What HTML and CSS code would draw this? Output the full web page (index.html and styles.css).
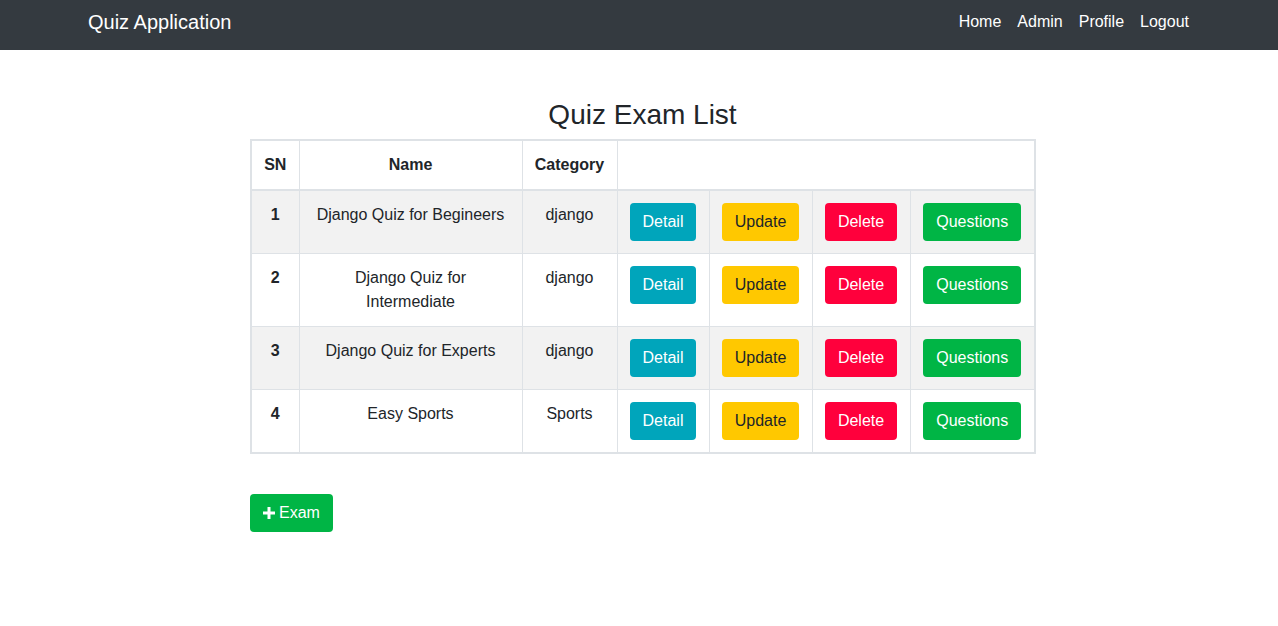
FILE: index.html
```html
<!DOCTYPE html>
<html lang="en">
<head>
<meta charset="utf-8">
<title>Quiz Application</title>
<link rel="stylesheet" href="styles.css">
</head>
<body>
<nav class="navbar">
  <a class="brand" href="#">Quiz Application</a>
  <ul class="nav">
    <li><a class="nav-link" href="#">Home</a></li>
    <li><a class="nav-link" href="#">Admin</a></li>
    <li><a class="nav-link" href="#">Profile</a></li>
    <li><a class="nav-link" href="#">Logout</a></li>
  </ul>
</nav>
<main class="content">
  <h3 class="title">Quiz Exam List</h3>
  <table class="table">
    <colgroup>
      <col class="c-sn"><col class="c-name"><col class="c-cat"><col class="c-detail"><col class="c-update"><col class="c-delete"><col class="c-q">
    </colgroup>
    <thead>
      <tr><th>SN</th><th>Name</th><th>Category</th><th colspan="4"></th></tr>
    </thead>
    <tbody>
      <tr class="striped">
        <th>1</th><td>Django Quiz for Begineers</td><td>django</td>
        <td><a class="btn btn-info" href="#">Detail</a></td>
        <td><a class="btn btn-warning" href="#">Update</a></td>
        <td><a class="btn btn-danger" href="#">Delete</a></td>
        <td><a class="btn btn-success" href="#">Questions</a></td>
      </tr>
      <tr>
        <th>2</th><td>Django Quiz for Intermediate</td><td>django</td>
        <td><a class="btn btn-info" href="#">Detail</a></td>
        <td><a class="btn btn-warning" href="#">Update</a></td>
        <td><a class="btn btn-danger" href="#">Delete</a></td>
        <td><a class="btn btn-success" href="#">Questions</a></td>
      </tr>
      <tr class="striped">
        <th>3</th><td>Django Quiz for Experts</td><td>django</td>
        <td><a class="btn btn-info" href="#">Detail</a></td>
        <td><a class="btn btn-warning" href="#">Update</a></td>
        <td><a class="btn btn-danger" href="#">Delete</a></td>
        <td><a class="btn btn-success" href="#">Questions</a></td>
      </tr>
      <tr>
        <th>4</th><td>Easy Sports</td><td>Sports</td>
        <td><a class="btn btn-info" href="#">Detail</a></td>
        <td><a class="btn btn-warning" href="#">Update</a></td>
        <td><a class="btn btn-danger" href="#">Delete</a></td>
        <td><a class="btn btn-success" href="#">Questions</a></td>
      </tr>
    </tbody>
  </table>
  <a class="btn btn-success btn-add" href="#"><svg class="plus" viewBox="0 0 12 12" width="12" height="12" aria-hidden="true"><path d="M4.5 0h3v4.5H12v3H7.5V12h-3V7.5H0v-3h4.5z" fill="#fff"/></svg>Exam</a>
</main>
</body>
</html>
```
FILE: styles.css
```css
* { box-sizing: border-box; }
body {
  margin: 0;
  font-family: "Liberation Sans", Arial, sans-serif;
  font-size: 16px;
  line-height: 1.5;
  color: #212529;
  background: #fff;
}
a { text-decoration: none; }

.navbar {
  height: 50px;
  background: #343a40;
  display: flex;
  align-items: center;
  justify-content: space-between;
  padding: 0 81px 6px 88px;
}
.brand {
  color: #fff;
  font-size: 20px;
  line-height: 30px;
}
.nav {
  list-style: none;
  margin: 0;
  padding: 0;
  display: flex;
}
.nav-link {
  display: block;
  color: #fff;
  padding: 0 8px;
  line-height: 24px;
}

.content {
  width: 785px;
  margin-left: 250px;
  padding-top: 48px;
}
.title {
  margin: 0 0 7px;
  font-size: 28px;
  font-weight: 500;
  line-height: 1.2;
  text-align: center;
}

.table {
  width: 784px;
  border-collapse: collapse;
  table-layout: fixed;
  border: 2px solid #dee2e6;
  text-align: center;
}
.c-sn { width: 48px; }
.c-name { width: 223px; }
.c-cat { width: 95px; }
.c-detail { width: 92px; }
.c-update { width: 103px; }
.c-delete { width: 98px; }
.c-q { width: 125px; }

.table th, .table td {
  border: 1px solid #dee2e6;
  padding: 12px;
  vertical-align: top;
}
.table th { font-weight: 700; }
.table thead th { border-bottom-width: 2px; }
.striped { background: #f2f2f2; }

.btn {
  display: inline-block;
  padding: 6px 12px;
  font-size: 16px;
  line-height: 24px;
  border: 1px solid transparent;
  border-radius: 4px;
  color: #fff;
  white-space: nowrap;
}
.btn-info { background: #00a5bb; }
.btn-warning { background: #ffc800; color: #212529; }
.btn-danger { background: #ff003c; }
.btn-success { background: #00b545; }

.btn-add {
  margin-top: 40px;
  display: inline-flex;
  align-items: center;
  gap: 4px;
}
.plus { display: block; }
```
